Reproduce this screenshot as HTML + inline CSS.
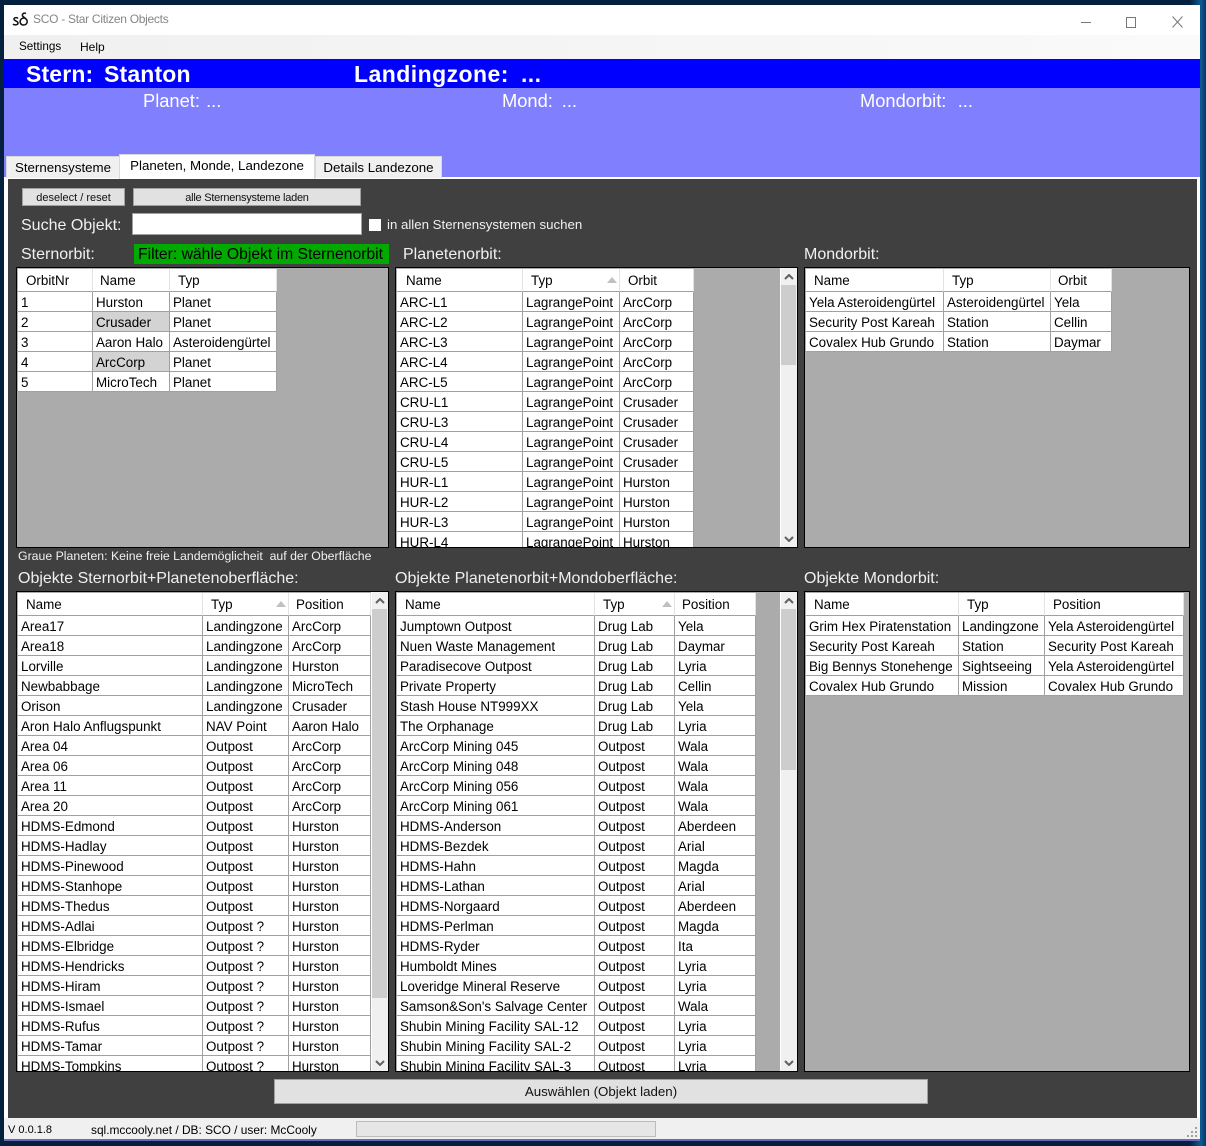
<!DOCTYPE html>
<html><head><meta charset="utf-8"><style>
*{box-sizing:border-box;margin:0;padding:0}
html,body{width:1206px;height:1146px;overflow:hidden;background:#04203f;font-family:"Liberation Sans",sans-serif;color:#000}
#bg{position:absolute;inset:0;background:linear-gradient(90deg,#04203f 0,#04203f 1190px,#0f5a96 1201px,#0a3560 1206px)}
.a{position:absolute;white-space:pre}
.l{position:absolute;white-space:pre;color:#f0f0f0;font-size:16px;line-height:20px}
.f{position:absolute;border:1px solid #000;padding:1px 0 0 1px;background:#ababab;overflow:hidden}
.r{display:grid;height:20px;font-size:13.4px;line-height:21px}
.r b{font-weight:400;background:#fff;border-right:1px solid #a0a0a0;border-bottom:1px solid #a0a0a0;padding-left:3px;overflow:hidden;white-space:pre}
.h{height:23px;line-height:24px}
.h b{border-right:1px solid #e3e3e3;border-bottom:1px solid #a0a0a0;padding-left:8px}
.s b:nth-child(2){background:#d3d3d3}
.sb{position:absolute;top:0;right:0;width:17px;bottom:0;background:#f0f0f0;border-left:1px solid #fff}
.th{position:absolute;left:0;width:15px;background:#cdcdcd}
.sb svg{position:absolute;left:3px}
.btn{position:absolute;background:#e1e1e1;border:1px solid #a0a0a0;text-align:center;font-size:11px;color:#111}
.tab{position:absolute;font-size:13.3px;text-align:center;border:1px solid #d9d9d9;border-bottom:0}
.g1 .r{grid-template-columns:75px 77px 107px;width:259px}
.g2 .r{grid-template-columns:126px 97px 74px;width:297px}
.g3 .r{grid-template-columns:138px 107px 61px;width:306px}
.g4 .r{grid-template-columns:185px 86px 82px;width:353px}
.g5 .r{grid-template-columns:198px 80px 81px;width:359px}
.g6 .r{grid-template-columns:153px 86px 139px;width:378px}
</style></head><body>
<div id="bg"></div>
<div class="a" style="left:4px;top:5px;width:1196px;height:1136px;background:#f0f0f0;border-bottom:2px solid #6a68b8"></div>
<div class="a" style="left:4px;top:5px;width:1196px;height:30px;background:#fff"></div>
<svg class="a" style="left:12px;top:12px" width="17" height="15" viewBox="0 0 17 15"><path d="M6 6.500C5 5 1.500 5.500 2 7.500 2.500 9 6 9 6 11 6 13 2.500 13.500 1 12" fill="none" stroke="#111" stroke-width="1.500"/><path d="M14 1.500C11.500 .5 10 2 10.500 4L14.500 7.500C16 9.500 15 13 11.500 13 8.500 13 7.500 10 8.500 8 9.500 6 12 5.500 14 6.500" fill="none" stroke="#111" stroke-width="1.500"/></svg>
<div class="a" style="left:33px;top:12px;font-size:12px;line-height:15px;color:#858585;letter-spacing:-.28px">SCO - Star Citizen Objects</div>
<svg class="a" style="left:1075px;top:10px" width="115" height="20" viewBox="0 0 115 20" fill="none" stroke="#777" stroke-width="1"><path d="M6 12.500H16"/><rect x="51.500" y="7.500" width="9" height="10"/><path d="M97.500 6.500L107.500 17.500M107.500 6.500L97.500 17.500"/></svg>
<div class="a" style="left:4px;top:35px;width:1196px;height:24px;background:linear-gradient(90deg,#f0f0f0,#fafafa)"></div>
<div class="a" style="left:19px;top:39px;font-size:11.700px;line-height:16px">Settings</div>
<div class="a" style="left:80px;top:39px;font-size:12px;line-height:16px">Help</div>
<div class="a" style="left:4px;top:59px;width:1196px;height:29px;background:#00f"></div>
<div class="a" style="left:4px;top:88px;width:1196px;height:89px;background:#8080ff"></div>
<div class="a" style="left:26px;top:60px;font-size:23px;line-height:28px;font-weight:700;color:#fff;letter-spacing:.15px;word-spacing:-1.2px">Stern:  Stanton</div>
<div class="a" style="left:354px;top:60px;font-size:23px;line-height:28px;font-weight:700;color:#fff;letter-spacing:.45px;word-spacing:-.8px">Landingzone:  ...</div>
<div class="a" style="left:143px;top:90px;font-size:18.300px;line-height:22px;color:#fff;word-spacing:-2px">Planet:  ...</div>
<div class="a" style="left:502px;top:90px;font-size:18.300px;line-height:22px;color:#fff;word-spacing:-.6px">Mond:  ...</div>
<div class="a" style="left:860px;top:90px;font-size:18.300px;line-height:22px;color:#fff;word-spacing:.6px">Mondorbit:  ...</div>
<div class="a" style="left:4px;top:177px;width:1196px;height:941px;background:#fff"></div>
<div class="a" style="left:8px;top:179px;width:1189px;height:939px;background:#404040"></div>
<div class="tab" style="left:6px;top:156px;width:114px;height:22px;background:#f0f0f0;line-height:22px">Sternensysteme</div>
<div class="tab" style="left:119px;top:154px;width:196px;height:25px;background:#fff;line-height:22px">Planeten, Monde, Landezone</div>
<div class="tab" style="left:315px;top:156px;width:127px;height:22px;background:#f0f0f0;line-height:22px">Details Landezone</div>
<div class="btn" style="left:22px;top:188px;width:103px;height:18px;line-height:18px">deselect / reset</div>
<div class="btn" style="left:133px;top:188px;width:228px;height:18px;line-height:18px;letter-spacing:-.25px">alle Sternensysteme laden</div>
<div class="l" style="left:21px;top:216px">Suche Objekt:</div>
<div class="a" style="left:132px;top:213px;width:230px;height:22px;background:#fff;border:1px solid #a0a0a0"></div>
<div class="a" style="left:369px;top:219px;width:12px;height:12px;background:#fff"></div>
<div class="l" style="left:387px;top:215px;font-size:13.250px">in allen Sternensystemen suchen</div>
<div class="l" style="left:21px;top:245px">Sternorbit:</div>
<div class="a" style="left:134px;top:244px;width:255px;height:20px;background:#00aa00;font-size:15.700px;line-height:22px;padding-left:4px">Filter: wähle Objekt im Sternenorbit</div>
<div class="l" style="left:403px;top:245px">Planetenorbit:</div>
<div class="l" style="left:804px;top:245px">Mondorbit:</div>

<div class="f g1" style="left:16px;top:267px;width:373px;height:281px">
<div class="r h"><b>OrbitNr</b><b style="padding-left:7px">Name</b><b>Typ</b></div>
<div class="r"><b>1</b><b>Hurston</b><b>Planet</b></div>
<div class="r s"><b>2</b><b>Crusader</b><b>Planet</b></div>
<div class="r"><b>3</b><b>Aaron Halo</b><b>Asteroidengürtel</b></div>
<div class="r s"><b>4</b><b>ArcCorp</b><b>Planet</b></div>
<div class="r"><b>5</b><b>MicroTech</b><b>Planet</b></div>
</div>

<div class="f g2" style="left:395px;top:267px;width:403px;height:281px">
<div class="r h"><b style="padding-left:9px">Name</b><b>Typ</b><b>Orbit</b></div>
<div class="r"><b>ARC-L1</b><b>LagrangePoint</b><b>ArcCorp</b></div>
<div class="r"><b>ARC-L2</b><b>LagrangePoint</b><b>ArcCorp</b></div>
<div class="r"><b>ARC-L3</b><b>LagrangePoint</b><b>ArcCorp</b></div>
<div class="r"><b>ARC-L4</b><b>LagrangePoint</b><b>ArcCorp</b></div>
<div class="r"><b>ARC-L5</b><b>LagrangePoint</b><b>ArcCorp</b></div>
<div class="r"><b>CRU-L1</b><b>LagrangePoint</b><b>Crusader</b></div>
<div class="r"><b>CRU-L3</b><b>LagrangePoint</b><b>Crusader</b></div>
<div class="r"><b>CRU-L4</b><b>LagrangePoint</b><b>Crusader</b></div>
<div class="r"><b>CRU-L5</b><b>LagrangePoint</b><b>Crusader</b></div>
<div class="r"><b>HUR-L1</b><b>LagrangePoint</b><b>Hurston</b></div>
<div class="r"><b>HUR-L2</b><b>LagrangePoint</b><b>Hurston</b></div>
<div class="r"><b>HUR-L3</b><b>LagrangePoint</b><b>Hurston</b></div>
<div class="r"><b>HUR-L4</b><b>LagrangePoint</b><b>Hurston</b></div>
<svg class="a" style="left:211px;top:9px" width="10" height="6"><path d="M0 6L5 0 10 6Z" fill="#c0c0c0"/></svg>
<div class="sb"><div class="th" style="top:17px;height:80px"></div>
<svg style="top:6px" width="10" height="6" viewBox="0 0 10 6"><path d="M1 5L5 1 9 5" fill="none" stroke="#606060" stroke-width="2"/></svg>
<svg style="bottom:5px" width="10" height="6" viewBox="0 0 10 6"><path d="M1 1L5 5 9 1" fill="none" stroke="#606060" stroke-width="2"/></svg></div>
</div>

<div class="f g3" style="left:804px;top:267px;width:386px;height:281px">
<div class="r h"><b>Name</b><b>Typ</b><b style="padding-left:7px">Orbit</b></div>
<div class="r"><b>Yela Asteroidengürtel</b><b>Asteroidengürtel</b><b>Yela</b></div>
<div class="r"><b>Security Post Kareah</b><b>Station</b><b>Cellin</b></div>
<div class="r"><b>Covalex Hub Grundo</b><b>Station</b><b>Daymar</b></div>
</div>

<div class="a" style="left:18px;top:549px;font-size:12.300px;line-height:15px;color:#f0f0f0">Graue Planeten: Keine freie Landemöglicheit  auf der Oberfläche</div>
<div class="l" style="left:18px;top:569px">Objekte Sternorbit+Planetenoberfläche:</div>
<div class="l" style="left:395px;top:569px">Objekte Planetenorbit+Mondoberfläche:</div>
<div class="l" style="left:804px;top:569px">Objekte Mondorbit:</div>

<div class="f g4" style="left:16px;top:591px;width:373px;height:481px">
<div class="r h"><b>Name</b><b>Typ</b><b style="padding-left:7px">Position</b></div>
<div class="r"><b>Area17</b><b>Landingzone</b><b>ArcCorp</b></div>
<div class="r"><b>Area18</b><b>Landingzone</b><b>ArcCorp</b></div>
<div class="r"><b>Lorville</b><b>Landingzone</b><b>Hurston</b></div>
<div class="r"><b>Newbabbage</b><b>Landingzone</b><b>MicroTech</b></div>
<div class="r"><b>Orison</b><b>Landingzone</b><b>Crusader</b></div>
<div class="r"><b>Aron Halo Anflugspunkt</b><b>NAV Point</b><b>Aaron Halo</b></div>
<div class="r"><b>Area 04</b><b>Outpost</b><b>ArcCorp</b></div>
<div class="r"><b>Area 06</b><b>Outpost</b><b>ArcCorp</b></div>
<div class="r"><b>Area 11</b><b>Outpost</b><b>ArcCorp</b></div>
<div class="r"><b>Area 20</b><b>Outpost</b><b>ArcCorp</b></div>
<div class="r"><b>HDMS-Edmond</b><b>Outpost</b><b>Hurston</b></div>
<div class="r"><b>HDMS-Hadlay</b><b>Outpost</b><b>Hurston</b></div>
<div class="r"><b>HDMS-Pinewood</b><b>Outpost</b><b>Hurston</b></div>
<div class="r"><b>HDMS-Stanhope</b><b>Outpost</b><b>Hurston</b></div>
<div class="r"><b>HDMS-Thedus</b><b>Outpost</b><b>Hurston</b></div>
<div class="r"><b>HDMS-Adlai</b><b>Outpost ?</b><b>Hurston</b></div>
<div class="r"><b>HDMS-Elbridge</b><b>Outpost ?</b><b>Hurston</b></div>
<div class="r"><b>HDMS-Hendricks</b><b>Outpost ?</b><b>Hurston</b></div>
<div class="r"><b>HDMS-Hiram</b><b>Outpost ?</b><b>Hurston</b></div>
<div class="r"><b>HDMS-Ismael</b><b>Outpost ?</b><b>Hurston</b></div>
<div class="r"><b>HDMS-Rufus</b><b>Outpost ?</b><b>Hurston</b></div>
<div class="r"><b>HDMS-Tamar</b><b>Outpost ?</b><b>Hurston</b></div>
<div class="r"><b>HDMS-Tompkins</b><b>Outpost ?</b><b>Hurston</b></div>
<svg class="a" style="left:259px;top:9px" width="10" height="6"><path d="M0 6L5 0 10 6Z" fill="#c0c0c0"/></svg>
<div class="sb"><div class="th" style="top:17px;height:389px"></div>
<svg style="top:6px" width="10" height="6" viewBox="0 0 10 6"><path d="M1 5L5 1 9 5" fill="none" stroke="#606060" stroke-width="2"/></svg>
<svg style="bottom:5px" width="10" height="6" viewBox="0 0 10 6"><path d="M1 1L5 5 9 1" fill="none" stroke="#606060" stroke-width="2"/></svg></div>
</div>

<div class="f g5" style="left:395px;top:591px;width:403px;height:481px">
<div class="r h"><b>Name</b><b>Typ</b><b style="padding-left:7px">Position</b></div>
<div class="r"><b>Jumptown Outpost</b><b>Drug Lab</b><b>Yela</b></div>
<div class="r"><b>Nuen Waste Management</b><b>Drug Lab</b><b>Daymar</b></div>
<div class="r"><b>Paradisecove Outpost</b><b>Drug Lab</b><b>Lyria</b></div>
<div class="r"><b>Private Property</b><b>Drug Lab</b><b>Cellin</b></div>
<div class="r"><b>Stash House NT999XX</b><b>Drug Lab</b><b>Yela</b></div>
<div class="r"><b>The Orphanage</b><b>Drug Lab</b><b>Lyria</b></div>
<div class="r"><b>ArcCorp Mining 045</b><b>Outpost</b><b>Wala</b></div>
<div class="r"><b>ArcCorp Mining 048</b><b>Outpost</b><b>Wala</b></div>
<div class="r"><b>ArcCorp Mining 056</b><b>Outpost</b><b>Wala</b></div>
<div class="r"><b>ArcCorp Mining 061</b><b>Outpost</b><b>Wala</b></div>
<div class="r"><b>HDMS-Anderson</b><b>Outpost</b><b>Aberdeen</b></div>
<div class="r"><b>HDMS-Bezdek</b><b>Outpost</b><b>Arial</b></div>
<div class="r"><b>HDMS-Hahn</b><b>Outpost</b><b>Magda</b></div>
<div class="r"><b>HDMS-Lathan</b><b>Outpost</b><b>Arial</b></div>
<div class="r"><b>HDMS-Norgaard</b><b>Outpost</b><b>Aberdeen</b></div>
<div class="r"><b>HDMS-Perlman</b><b>Outpost</b><b>Magda</b></div>
<div class="r"><b>HDMS-Ryder</b><b>Outpost</b><b>Ita</b></div>
<div class="r"><b>Humboldt Mines</b><b>Outpost</b><b>Lyria</b></div>
<div class="r"><b>Loveridge Mineral Reserve</b><b>Outpost</b><b>Lyria</b></div>
<div class="r"><b>Samson&amp;Son's Salvage Center</b><b>Outpost</b><b>Wala</b></div>
<div class="r"><b>Shubin Mining Facility SAL-12</b><b>Outpost</b><b>Lyria</b></div>
<div class="r"><b>Shubin Mining Facility SAL-2</b><b>Outpost</b><b>Lyria</b></div>
<div class="r"><b>Shubin Mining Facility SAL-3</b><b>Outpost</b><b>Lyria</b></div>
<svg class="a" style="left:266px;top:9px" width="10" height="6"><path d="M0 6L5 0 10 6Z" fill="#c0c0c0"/></svg>
<div class="sb"><div class="th" style="top:17px;height:161px"></div>
<svg style="top:6px" width="10" height="6" viewBox="0 0 10 6"><path d="M1 5L5 1 9 5" fill="none" stroke="#606060" stroke-width="2"/></svg>
<svg style="bottom:5px" width="10" height="6" viewBox="0 0 10 6"><path d="M1 1L5 5 9 1" fill="none" stroke="#606060" stroke-width="2"/></svg></div>
</div>

<div class="f g6" style="left:804px;top:591px;width:386px;height:481px">
<div class="r h"><b>Name</b><b>Typ</b><b>Position</b></div>
<div class="r"><b>Grim Hex Piratenstation</b><b>Landingzone</b><b>Yela Asteroidengürtel</b></div>
<div class="r"><b>Security Post Kareah</b><b>Station</b><b>Security Post Kareah</b></div>
<div class="r"><b>Big Bennys Stonehenge</b><b>Sightseeing</b><b>Yela Asteroidengürtel</b></div>
<div class="r"><b>Covalex Hub Grundo</b><b>Mission</b><b>Covalex Hub Grundo</b></div>
</div>

<div class="btn" style="left:274px;top:1079px;width:654px;height:25px;line-height:23px;font-size:13.300px;text-align:center">Auswählen (Objekt laden)</div>
<div class="a" style="left:8px;top:1123px;font-size:11px;line-height:15px">V 0.0.1.8</div>
<div class="a" style="left:91px;top:1123px;font-size:11.900px;line-height:15px">sql.mccooly.net / DB: SCO / user: McCooly</div>
<div class="a" style="left:356px;top:1121px;width:300px;height:16px;background:#e6e6e6;border:1px solid #bcbcbc"></div>
<svg class="a" style="left:1187px;top:1127px" width="12" height="11"><path d="M8 0h2v2H8zM4 4h2v2H4zM8 4h2v2H8zM0 8h2v2H0zM4 8h2v2H4zM8 8h2v2H8z" fill="#a0a0a0"/></svg>
</body></html>
